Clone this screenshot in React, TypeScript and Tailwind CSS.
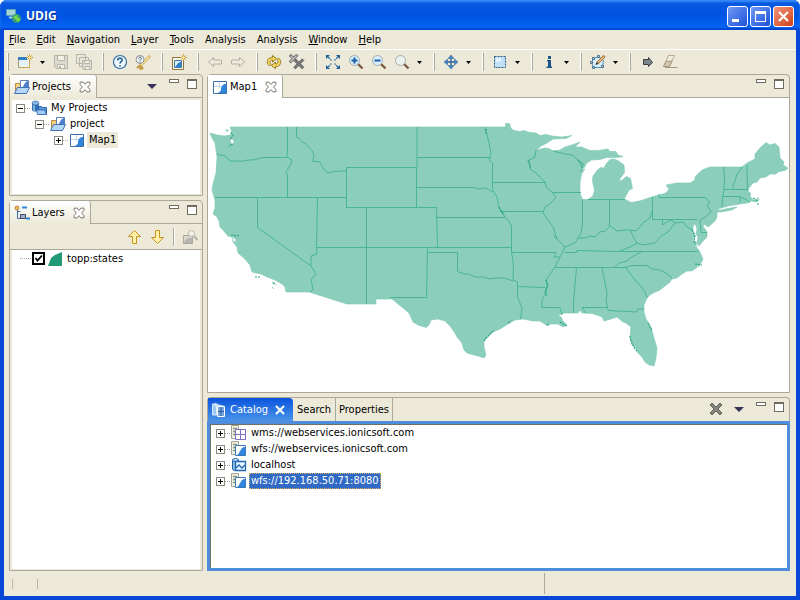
import type { ReactNode } from "react";

const OUTLINE =
  "M230 127H505.500V123.500H509.500L511 128.500 514 130.500 520 131.500 524 130.500 530 132.500 536 133 540 135.500 546 134.500 552 136 562 137 572 135.500 566 138.500 553 139 547 143 541 146 536.500 150 545 148 550 149 553 151 560 150 565 147 572 145 580 142 577 145 575 147 581.500 147 590 150.500 598 150.500 608 149 610 151.500 616 151.500 618 155 623 156.500 616.500 157.500 606.500 157.500 600 159.500 591.500 160 587 163 584 168 578 172 585 169 581.500 174 580 183 580 193 582.500 199.500 588 199.500 593 196 594.500 190 592.500 181.500 593 176 597.500 170 601.500 167 603 169 606.500 163.500 610 159.500 614 159 618.500 161 624 165 624.500 172.500 619 180 621.500 180.500 626.500 176.500 630.500 178.500 632.500 188.500 629 190 626.500 195 624 199 631.500 202.500 641.500 200.500 650 197.500 659 195 666 193 669 189 666 185 677 183 690 183 695 180 695 177 702 170 710 167H742L747 163 755 159 755 154 760 148 766 142.500 770 145 775 143.500 779 147 780 158 784 162 783 165 788 168 786 170 778 172 776 174 770 174 766 177 760 178 757 182 753 183 749 188 748 191 751 193.500 750 196 753 200 758 200 757 197 759 200 757 202 751 201 747 203 740 204 728 206 718 209 719 210.500 728 208.500 737 207 732 210 720 212 717 212 717 217 715 221 708 227 704 224 703 226 707 232 707 237 703 241 699 246 697 243 698 237 696 234 697 229 695 223 693 227 693 231 695 237 692 239 697 243 694 245 699 250 703 259 701 263 700 265 696 268 692 271 687 271 682 274 677 278 672 279 669 283 665 286 660 290 653 293 650 295 647 298 644 305 644 312 646 319 651 327 654 338 657 348 656 358 654 366 649 365 645 362 642 357 638 353 636 348 632 345 630 338 631 327 626 323 623 322 617 317 611 319 604 321 602 317 597 315 592 313.500 582 313 580 310 578 313 565 313 558 315 561 317 563 321 567 325 563 327 558 324 551 324 547 325.500 540 321 533 321 523 319 515 320 508 324 500 329 493 332 489 336 484 341 484 347 486 355 484 358 478 356 467 353 464 350 462 343 457 337 455 333 450 326 445 321 438 319 431 320 429 325 426 327.500 418 325 413 322 409 313 403 308 392 299H376V304H347L309 292 286 292 285 287 282 284 275 280 267 277 261 274 252 272 250 265 244 258 238 253 237 247 233 242 232 237 228 236 223 230 220 227 219 221 217 217 213 214 215 208 215 200 212 190 213 184 216 173 217 157 215 143 212 138 210 133 217 135 225 136 230 135 232 132Z";

const BORDERS =
  "M287.500 127V149L287 157 292 160 291 164 286 172 287.500 176V197M217 154 225 156 227 158 230 161 243 161 248 160 253 160 263 157.500H287M215 197.500H346.500M257.500 197.500V227.500L311 266 316 274 311 280 313 289 311 292M317.500 197.500 316.500 247.500 317 254 311 256 311 266M296.500 127V137L300 139 302 142 305 143 313 152 314 157 312 161 320 162 323 168 328 173 332 172 340 171 346 171M346.500 167.500H417V127M416.500 167.500V207.500M417 157.500H491M346.500 167.500V207.500H436.500L437.500 247.500M366.500 207.500V304M316.500 247.500H511.500M416.500 187.500H474L478 189 484 188 488 189 492 192M485 127 487 135 489 143 491 153 489 160 492.500 163V190L497 197 499 208 505 217 508 220 511.500 226V252L513.500 265 513 280 517.500 282V297L522 308 520.500 319M492 182.500H545M500 211.500H543M436.500 217.500H505M427.500 247.500 426.500 297.500H390M427.500 252.500H457.500V271.500L465 274 469 274 475 277 483 277 490 279 496 278 505 278 513 281M517.500 286.500 545.500 287.500M512 252.500H556L554 257H560M536 150 535 157 529 160 530 169 536 173 545 182 546 187 552 192 556 197 551 203 545 207 543 213 549 221 553 227 557 239M553 235 560 242 565 247 560 257 555 267 550 274 546 280 547 286 546 293 542 300 542 307.500H560L562 315M552 192.500H581M553 151 565 154 572 155 578 160 582 167M582.500 199.500V224L581 233 578 238M609.500 199.500V226M588 199.500H625M565 247 575 243 578 238 585 238 590 236 595 237 600 232 605 231 610 226 617 231 625 230 630 230 636 231 640 227 644 222 650 218 652.500 210V197M652.500 210V219.500H697M659 194V197.500H705L710 202 707 205 711 212 705 217 700 220 701 232.500H707M662.500 219.500V225L670 220 676 223 683 222 687 227 693 230M675 223 668 232 660 237 655 243 643 245 637 243 634 238 630 230M637 243 630 247 620 251M565 252.500H577V250.500L620 251.500H698M641 252 630 258 627 261 619 263 615 267M555 267.500H625L632 265.500H647L652 269 660 270 666 273 672 278M625 267 629 272 635 280 640 285 645 292 647 298M576.500 267.500 573.500 302V313M602 267.500 607 293 606 300 608 310M582 307.500H608M582 307.500 586 313M608 310.500 637 312 638 309 644 309M723.500 167 724.500 178 724 190 722.500 197 722 207M742 167 739 172 737 174 735 181 733 185V190M724 189.500H747M747 165V170L747.500 190M722.500 196.500H740V203M740 197 747 200 750 203";

const DETAILS =
  "M231 132 233 136 230 139 233 144 229 146M486 129V134M528 160 531 168M231 235 240 236M255 277H261M273 283 276 285M484 341 486 338 490 334 494 330M508 323 511 321M547 324 549 326M560 322 567 326M630 336 631 341 635 349 638 352M648 323 652 331M692 230 695 235 694 241 697 247M695 264 702 265M753 198 758 201M757 204H759M578 160 583 164 581 171M546 280 548 285 545 292 547 296M499 207 504 215";

function UsMap() {
  return (
    <svg viewBox="208 98 581 294" className="h-full w-full" preserveAspectRatio="xMinYMin meet" role="img" aria-label="topp:states">
      <path d={OUTLINE} fill="#8ccebc" stroke="#7cc8b2" strokeWidth=".6" />
      <path d={BORDERS} fill="none" stroke="#43b292" strokeWidth=".9" />
      <path d={DETAILS} fill="none" stroke="#2ba580" strokeWidth="1.200" strokeDasharray="2 1" />
      <path d="M230 140 232 139 234 142 232 144ZM232 237 236 240 234 242Z" fill="#fff" />
      <path d="M226 130h2v1h-2zM272 282l3 1M272 287l2 2" fill="#8ccebc" stroke="#8ccebc" />
    </svg>
  );
}

function Svg({ children, size = 16 }: { children: ReactNode; size?: number }) {
  return (
    <svg width={size} height={size} viewBox="0 0 16 16" fill="none" className="shrink-0" aria-hidden="true">
      {children}
    </svg>
  );
}

const star = <path d="M12.500 0v7M9 3.500h7M10.500 1.500l4 4M14.500 1.500l-4 4" stroke="#c08c28" />;
const starCore = <path d="M12.500 1.500v4M10.500 3.500h4" stroke="#fff0a8" />;

const NewIcon = () => (
  <Svg>
    <path d="M1.500 3.500h11v10h-11z" fill="#e4f3fb" stroke="#a79b6c" />
    <path d="M1 3h9v3H1z" fill="#2f7fc4" />
    <path d="M3 13.500h9.500V7" stroke="#d8a74a" />
    {star}
    {starCore}
  </Svg>
);
const SaveIcon = () => (
  <Svg>
    <path d="M1.500 1.500h13v13h-11l-2-2z" fill="#dcdad0" stroke="#b7b4a8" />
    <path d="M4.500 1.500h7v5h-7zM4.500 10.500h7v4h-7z" fill="#f2f0e8" stroke="#b7b4a8" />
    <path d="M6 12h2v2H6z" fill="#b7b4a8" />
  </Svg>
);
const SaveAllIcon = () => (
  <Svg>
    <path d="M.5.5h9v9h-9zM3.500 3.500h9v9h-9z" fill="#e9e6da" stroke="#b7b4a8" />
    <path d="M6.500 6.500h9v9h-8l-1-1z" fill="#dcdad0" stroke="#b7b4a8" />
    <path d="M8.500 6.500h5v3h-5zM9.500 12.500h4v3h-4z" fill="#f2f0e8" stroke="#b7b4a8" />
  </Svg>
);
const HelpIcon = () => (
  <Svg>
    <circle cx="8" cy="8" r="6.500" fill="#f2faff" stroke="#2d6a9c" strokeWidth="1.200" />
    <path d="M5.700 6.500C5.700 3.200 10.400 3.500 10.200 6.200 10.100 7.700 8 7.700 8 9.600M8 11v1.500" stroke="#2d6a9c" strokeWidth="1.700" />
  </Svg>
);
const HelpKeyIcon = () => (
  <Svg>
    <path d="M15 2 5 12l-3 2M5 12l1 3 2-2" stroke="#c79a44" strokeWidth="2.600" />
    <path d="M14.500 2.500 6 11" stroke="#ffe9a4" strokeWidth="1.500" />
    <circle cx="5" cy="5.500" r="4" fill="#eef3f5" stroke="#878e94" />
    <path d="M3.700 4.500c0-2 3-1.500 2.600.2C6.200 5.600 5 5.600 5 6.600M5 7.500v1" stroke="#4b5a6c" />
  </Svg>
);
const NewMapIcon = () => (
  <Svg>
    <path d="M1.500 3.500h11v12h-11z" fill="#fdf7e0" stroke="#8a7444" />
    <path d="M3.500 6.500h7v7h-7z" fill="#dff0fb" stroke="#3a78a8" />
    <path d="M10 8v5H4c2-1 2-5 6-5Z" fill="#2f80cf" />
    {star}
    {starCore}
  </Svg>
);
const BackIcon = () => (
  <Svg>
    <path d="M1.500 8 6.500 3.500v2.500H13.500a1 1 0 0 1 1 1v3H6.500v2.500Z" fill="#efecdf" stroke="#b1ae9f" />
  </Svg>
);
const ForwardIcon = () => (
  <Svg>
    <path d="M14.500 8 9.500 3.500v2.500H2.500a1 1 0 0 0-1 1v3h8v2.500Z" fill="#efecdf" stroke="#b1ae9f" />
  </Svg>
);
const RefreshIcon = () => (
  <Svg>
    <path
      d="M6.500 1.500 10.500 4.500 6.500 8V6C4 6 3 8 5 10.500L3.500 12C-.5 8.500 1 3.500 6.500 3.500Z"
      fill="#f7dc62"
      stroke="#967a22"
      strokeLinejoin="round"
    />
    <path
      d="M9.500 14.500 5.500 11.500 9.500 8V10C12 10 13 8 11 5.500L12.500 4C16.500 7.500 15 12.500 9.500 12.500Z"
      fill="#f7dc62"
      stroke="#967a22"
      strokeLinejoin="round"
    />
  </Svg>
);
const cross = "m2 4 2-2 4 4 4-4 2 2-4 4 4 4-2 2-4-4-4 4-2-2 4-4Z";
const RemoveAllIcon = () => (
  <Svg>
    <g transform="translate(-1 -1) scale(.7)">
      <path d={cross} fill="#d8d6ce" stroke="#77777a" strokeWidth="1.500" />
    </g>
    <g transform="translate(3 3) scale(.85)">
      <path d={cross} fill="#77777a" stroke="#666" strokeLinejoin="round" />
    </g>
  </Svg>
);
const RemoveIcon = () => (
  <Svg>
    <path d={cross} fill="#84847f" stroke="#65655f" strokeLinejoin="round" />
  </Svg>
);
const ExtentIcon = () => (
  <Svg>
    <path d="m2 2 4.500 4.500M14 2 9.500 6.500M2 14l4.500-4.500M14 14 9.500 9.500" stroke="#2f76b2" strokeWidth="1.300" strokeDasharray="4 .8" />
    <path d="M1 1h4L1 5zM15 1h-4l4 4zM1 15h4l-4-4zM15 15h-4l4-4z" fill="#1f5e97" />
  </Svg>
);
const Magnifier = ({ sign, tint }: { sign?: string; tint: string }) => (
  <Svg>
    <path d="m10 10 4.500 4.500" stroke="#7d5a40" strokeWidth="2.400" />
    <circle cx="6.500" cy="6.500" r="5" fill={tint} stroke="#a5adb0" />
    {sign && <path d={sign} stroke="#1d5fa8" strokeWidth="2" />}
  </Svg>
);
const PanIcon = () => (
  <Svg>
    <path d="M8 2v12M2 8h12" stroke="#2b5f97" strokeWidth="1.300" />
    <path d="m8 1 3 3.500H5zM8 15l3-3.500H5zM1 8l3.500-3v6zM15 8l-3.500-3v6z" fill="#4b8cca" stroke="#2b5f97" strokeWidth=".5" />
  </Svg>
);
const SelectIcon = () => (
  <Svg>
    <path d="M2.500 2.500h11v11h-11z" fill="#bfe0f6" stroke="#2a5a80" strokeDasharray="2 1" />
    <path d="M4 4h5v4H4z" fill="#e0f1fb" />
  </Svg>
);
const InfoIcon = () => (
  <Svg>
    <path d="M7 2h3v3H7zM6 6h4v6.500h1V14H5.500v-1.500H7v-5H6z" fill="#1f5488" />
  </Svg>
);
const EditIcon = () => (
  <Svg>
    <path d="m3.500 4.500 5-2 5 4-1 7h-9l-2-5Z" fill="#d9effb" stroke="#4a8fb8" />
    <path d="M7.500 1.500h2v2h-2zM2.500 3.500h2v2h-2zM.5 7.500h2v2h-2zM2.500 12.500h2v2h-2zM11.500 11.500h2v2h-2z" fill="#cfe0ea" stroke="#4a6f88" />
    <path d="m14.500 2-7 7" stroke="#8c5e20" strokeWidth="2.600" />
    <path d="m14 2.500-6 6" stroke="#f2c47c" strokeWidth="1.400" />
    <path d="m5.500 11 1-3 2 2Z" fill="#333" />
  </Svg>
);
const TagIcon = () => (
  <Svg>
    <path d="M4.500 5.500h5v-2l4 5-4 4v-2h-5z" fill="#7b858c" stroke="#3a4046" />
  </Svg>
);
const EraserIcon = () => (
  <Svg>
    <path d="M6.500 1.500h6l-5 11h-6Z" fill="#f2ebdd" stroke="#b6a893" />
    <path d="m4 7.500 6-.5-2.500 5.500h-6Z" fill="#d7c6ae" stroke="#a89880" />
    <path d="M3 13.500h12.500" stroke="#a89880" />
  </Svg>
);
const OpenFolderIcon = () => (
  <Svg>
    <path d="M1.500 13.500v-9h4l1 2h6v7z" fill="#f8d27c" stroke="#b98a44" />
    <path d="M6.500 1.500h8v8h-8z" fill="#fff" stroke="#5b80b4" />
    <path d="M14 2v7H8c2-2 2-6 6-7Z" fill="#4f80d0" />
    <path d="M.5 14.500 3.500 8.500h12l-3 6z" fill="#b4d6f7" stroke="#4272b4" />
  </Svg>
);
const ProjectsIcon = () => (
  <Svg>
    <path d="M1 3v7c0 2 7 2 7 0V3Z" fill="#3671b4" />
    <path d="M2 4v6c0 1 2 1 2 1V4Z" fill="#7fb0de" />
    <ellipse cx="4.500" cy="3" rx="3.500" ry="2" fill="#8ab6e2" stroke="#2b5e9c" strokeWidth=".6" />
    <path d="M7.500 14.500v-8h3l1 1h4v7z" fill="#5592d8" stroke="#2d64aa" />
    <path d="M6.500 14.500 5.500 10h8l2 4.500z" fill="#a4cdf5" stroke="#3c74b8" />
  </Svg>
);
const MapIcon = () => (
  <Svg>
    <path d="M1.500 2.500h13v12h-13z" fill="#fff" stroke="#3b6ea4" />
    <path d="M7.500 3v6M2 7.500h7" stroke="#c5d7e8" />
    <path d="M14 5v9H6c1-1 3-1 3-4s2-5 5-5Z" fill="#2f86dc" />
  </Svg>
);
const LayersIcon = () => (
  <Svg>
    <path d="M3.500 5v8.500H7M3.500 6.500h3" stroke="#3a6ea8" />
    <circle cx="3" cy="3" r="2" fill="#f0ba58" stroke="#b98a44" />
    <path d="M8 2.500h5M12 13.500h4" stroke="#2f86dc" strokeWidth="2" />
    <path d="M6.500 9.500h5v4h-5z" fill="#a9b0cc" stroke="#3d4668" />
  </Svg>
);
const ServerIcon = ({ wms }: { wms?: boolean }) => (
  <Svg>
    <path d="M.5.500h7v13h-7z" fill="#f1f1e4" stroke="#a0a596" />
    <path d="M2 3.500h4M2 6.500h4M2 9.500h4" stroke="#83987a" strokeWidth="1.500" />
    <path d="M4.500 4.500h10v10h-10z" fill="#fff" stroke={wms ? "#7d6fc4" : "#3b78b8"} />
    {wms ? <path d="M9.500 5v9M5 9.500h9" stroke="#7d6fc4" /> : <path d="M14 6v8H6c3-1 3-8 8-8Z" fill="#2f86dc" />}
  </Svg>
);
const LocalIcon = () => (
  <Svg>
    <path d="M1.500 3v9c0 2 6 2 6 0V3Z" fill="#8dbde8" stroke="#2464a8" />
    <ellipse cx="4.500" cy="3" rx="3" ry="1.500" fill="#cce4f8" stroke="#2464a8" />
    <path d="M4.500 4.500h10v9h-10z" fill="#e7f3fd" stroke="#1f66b4" strokeWidth="1.300" />
    <path d="m5 11 3-3 3 3 3-3" stroke="#1f66b4" strokeWidth="1.300" />
  </Svg>
);
const CatalogIcon = () => (
  <Svg>
    <path d="M1.500 2v11h4V2ZM4.500 1v3h8" fill="#9cc8f4" stroke="#dceaff" />
    <path d="M6.500 4.500h7v10h-7z" fill="#77a8dc" stroke="#fff" />
    <path d="M10 5v9M7 9.500h6" stroke="#3157a0" />
  </Svg>
);
const ArrowIcon = ({ down }: { down?: boolean }) => (
  <Svg>
    <path
      d={down ? "M5.500 1.500h4v7h4l-6 6-6-6h4Z" : "M5.500 14.500h4v-7h4l-6-6-6 6h4Z"}
      fill="#fff1a8"
      stroke="#c89224"
    />
  </Svg>
);
const ZoomLayerIcon = () => (
  <Svg>
    <path d="M1.500 6.500h9v8h-9z" fill="#dcdad0" stroke="#aaa89e" />
    <path d="M2 14c1-4 3-5 8-5v5Z" fill="#b5b4ae" />
    <circle cx="9.500" cy="4.500" r="3" fill="#f4f2ea" stroke="#b5b3a8" />
    <path d="m12 7 3.500 4" stroke="#b5b3a8" strokeWidth="2" />
  </Svg>
);
const AppIcon = () => (
  <Svg>
    <path d="M.5 1.500h9v6h-9z" fill="#a8d4d8" stroke="#5fa2b8" />
    <path d="M3 9.500h7" stroke="#a8d4d8" strokeWidth="2" />
    <circle cx="10.500" cy="10.500" r="4.500" fill="#389c70" />
    <path d="m7 9 4-2 1 3 3 1-3 3-2-2Z" fill="#72d852" />
  </Svg>
);

const Drop = () => (
  <svg width="5" height="3" viewBox="0 0 5 3" aria-hidden="true">
    <path d="M0 0h5L2.500 3z" fill="#000" />
  </svg>
);

type Tool = { name: string; icon: ReactNode; drop?: boolean };
const TOOLS: Tool[][] = [
  [
    { name: "New", icon: <NewIcon />, drop: true },
    { name: "Save", icon: <SaveIcon /> },
    { name: "Save All", icon: <SaveAllIcon /> },
  ],
  [
    { name: "Help Contents", icon: <HelpIcon /> },
    { name: "Search Help", icon: <HelpKeyIcon /> },
  ],
  [{ name: "New Map", icon: <NewMapIcon /> }],
  [
    { name: "Back", icon: <BackIcon /> },
    { name: "Forward", icon: <ForwardIcon /> },
  ],
  [
    { name: "Refresh", icon: <RefreshIcon /> },
    { name: "Stop Rendering", icon: <RemoveAllIcon /> },
  ],
  [
    { name: "Zoom to Extent", icon: <ExtentIcon /> },
    { name: "Zoom In", icon: <Magnifier sign="M6.500 3.500v6M3.500 6.500h6" tint="#d7eefb" /> },
    { name: "Zoom Out", icon: <Magnifier sign="M3.500 6.500h6" tint="#d7eefb" /> },
    { name: "Zoom", icon: <Magnifier tint="#e9f2ec" />, drop: true },
  ],
  [{ name: "Pan", icon: <PanIcon />, drop: true }],
  [{ name: "Select", icon: <SelectIcon />, drop: true }],
  [{ name: "Info", icon: <InfoIcon />, drop: true }],
  [{ name: "Edit Geometry", icon: <EditIcon />, drop: true }],
  [
    { name: "Commit", icon: <TagIcon /> },
    { name: "Clear", icon: <EraserIcon /> },
  ],
];

const MENUS = [
  ["F", "ile"],
  ["E", "dit"],
  ["N", "avigation"],
  ["L", "ayer"],
  ["T", "ools"],
  ["", "Analysis"],
  ["", "Analysis"],
  ["W", "indow"],
  ["H", "elp"],
];

function PanelButtons({ children }: { children?: ReactNode }) {
  return (
    <div className="ml-auto flex items-start pt-[4px] pr-[5px]">
      {children}
      <button aria-label="Minimize" className="mr-[8px] h-[4px] w-[10px] border border-[#6f6c5f] bg-white" />
      <button aria-label="Maximize" className="h-[10px] w-[10px] border border-t-2 border-[#6f6c5f] bg-white" />
    </div>
  );
}

const ViewMenu = () => (
  <button aria-label="View menu" className="mt-[5px] mr-[12px]">
    <svg width="10" height="5" viewBox="0 0 10 5" className="block">
      <path d="M0 0h10L5 5z" fill="#343256" />
    </svg>
  </button>
);

function CloseTab() {
  return (
    <button aria-label="Close">
      <svg width="12" height="12" viewBox="0 0 16 16" className="block">
        <path d="m1.500 1.500h4l2.500 3 2.500-3h4v3L11.500 8l3 3.500v3h-4L8 11.500l-2.500 3h-4v-3l3-3.500-3-3.500Z" fill="#fff" stroke="#77746a" strokeWidth="1.300" />
      </svg>
    </button>
  );
}

function Tab({ icon, label, white }: { icon: ReactNode; label: string; white?: boolean }) {
  return (
    <div
      className={
        "-mb-px flex items-center gap-[2px] rounded-tr-[3px] border-r border-[#aca899] pr-[5px] pl-[4px] " +
        (white ? "bg-white" : "bg-linear-to-b from-white to-[#ece9d8]")
      }
    >
      {icon}
      <span className="mr-[6px]">{label}</span>
      <CloseTab />
    </div>
  );
}

const headerClass = "flex h-[23px] shrink-0 border-b border-[#aca899]";
const panelClass = "flex flex-col rounded-t-[4px] border border-[#aca899]";

function Expander({ open }: { open?: boolean }) {
  return (
    <button
      aria-label={open ? "Collapse" : "Expand"}
      className="flex h-[9px] w-[9px] shrink-0 items-center justify-center border border-[#8a8a80] bg-white"
    >
      <svg width="5" height="5" viewBox="0 0 5 5">
        <path d={open ? "M0 2.500h5" : "M0 2.500h5M2.500 0v5"} stroke="#000" />
      </svg>
    </button>
  );
}

function TreeRow({ open, icon, label, tone, indent }: { open?: boolean; icon: ReactNode; label: string; tone?: string; indent?: string }) {
  return (
    <li className={"flex h-[16px] items-center " + (indent ?? "")}>
      <Expander open={open} />
      <span className="mr-[1px] w-[5px] border-t border-dotted border-[#aca899]" />
      {icon}
      <span className={"ml-[2px] px-[2px] leading-[16px] " + (tone ?? "")}>{label}</span>
    </li>
  );
}

const captionButton = "flex h-[21px] w-[21px] items-center justify-center rounded-[3px] border border-white";

export default function App() {
  return (
    <div className="flex h-screen w-full flex-col overflow-hidden rounded-t-[7px] bg-[#0846d8] font-['DejaVu_Sans_Condensed','DejaVu_Sans',sans-serif] text-[11px] leading-[14px] text-black">
      <header className="flex h-[30px] shrink-0 items-center gap-[4px] bg-linear-to-b from-[#0a5ae0] via-[#0054e3] to-[#0566f8] pt-[2px] pr-[6px] pl-[6px] shadow-[inset_0_2px_2px_#3a8cf8,inset_0_-2px_1px_#0048d0]">
        <AppIcon />
        <h1 className="font-['Open_Sans',sans-serif] text-[12px] font-bold text-white [text-shadow:1px_1px_#0a2f90]">UDIG</h1>
        <div className="ml-auto flex gap-[2px]">
          <button aria-label="Minimize window" className={captionButton + " bg-linear-to-br from-[#6f98f4] to-[#1e50d8]"}>
            <span className="mt-[8px] mr-[5px] h-[3px] w-[7px] bg-white" />
          </button>
          <button aria-label="Maximize window" className={captionButton + " bg-linear-to-br from-[#6f98f4] to-[#1e50d8]"}>
            <span className="h-[11px] w-[11px] border border-t-[3px] border-white" />
          </button>
          <button aria-label="Close window" className={captionButton + " bg-linear-to-br from-[#f09478] to-[#d03c14]"}>
            <svg width="13" height="13" viewBox="0 0 13 13">
              <path d="m2 2 9 9M11 2l-9 9" stroke="#fff" strokeWidth="2.200" />
            </svg>
          </button>
        </div>
      </header>

      <div className="mx-[4px] mb-[4px] flex min-h-0 flex-1 flex-col bg-[#ece9d8]">
        <nav className="flex h-[20px] shrink-0 items-center gap-[11px] border-b border-white pl-[5px]">
          {MENUS.map(([key, rest], i) => (
            <button key={i}>
              <u className="underline-offset-1">{key}</u>
              {rest}
            </button>
          ))}
        </nav>

        <div role="toolbar" className="flex h-[24px] shrink-0 items-center">
          {TOOLS.map((group, g) => (
            <div key={g} className="flex items-center">
              <span className={"mr-[4px] h-[18px] w-[2px] border-r border-l border-r-[#aca899] border-l-white " + (g ? "ml-[7px]" : "ml-[3px]")} />
              {group.map((t) => (
                <div key={t.name} className="flex">
                  <button aria-label={t.name} className="flex w-[23px] justify-center">
                    {t.icon}
                  </button>
                  {t.drop && (
                    <button aria-label={t.name + " options"} className="flex w-[13px] items-center justify-center">
                      <Drop />
                    </button>
                  )}
                </div>
              ))}
            </div>
          ))}
        </div>

        <main className="flex min-h-0 flex-1 gap-[4px] pr-[6px] pl-[5px]">
          <div className="flex w-[194px] shrink-0 flex-col gap-[4px]">
            <section className={panelClass + " h-[122px] shrink-0"}>
              <div className={headerClass}>
                <Tab icon={<OpenFolderIcon />} label="Projects" />
                <PanelButtons>
                  <ViewMenu />
                </PanelButtons>
              </div>
              <ul className="m-[2px] mb-px flex-1 bg-white pl-[4px]">
                <TreeRow open icon={<ProjectsIcon />} label="My Projects" />
                <TreeRow open icon={<OpenFolderIcon />} label="project" indent="pl-[19px]" />
                <TreeRow icon={<MapIcon />} label="Map1" indent="pl-[38px]" tone="bg-[#ece9d8]" />
              </ul>
            </section>

            <section className={panelClass + " min-h-0 flex-1"}>
              <div className={headerClass}>
                <Tab icon={<LayersIcon />} label="Layers" />
                <PanelButtons />
              </div>
              <div className="flex h-[26px] shrink-0 items-center justify-end gap-[7px] border-b border-[#aca899] pr-[4px]">
                <button aria-label="Move up"><ArrowIcon /></button>
                <button aria-label="Move down"><ArrowIcon down /></button>
                <span className="h-[18px] w-[2px] border-r border-l border-r-white border-l-[#aca899]" />
                <button aria-label="Zoom to layer"><ZoomLayerIcon /></button>
              </div>
              <div className="mx-[2px] mb-px flex-1 bg-white">
                <label className="flex h-[17px] items-center pl-[8px]">
                  <span className="mr-[1px] w-[11px] border-t border-dotted border-[#aca899]" />
                  <span className="relative flex h-[13px] w-[13px]">
                    <input type="checkbox" defaultChecked className="h-[13px] w-[13px] appearance-none border-2 border-black bg-white" />
                    <svg width="13" height="13" viewBox="0 0 13 13" className="pointer-events-none absolute inset-0">
                      <path d="m3.500 6 2 2.500 4.500-5" fill="none" stroke="#000" strokeWidth="1.800" />
                    </svg>
                  </span>
                  <svg width="14" height="14" viewBox="0 0 14 14" className="ml-[3px]" aria-hidden="true">
                    <path d="M0 14 3 6l4-3 7-3v14Z" fill="#219a78" />
                  </svg>
                  <span className="ml-[5px]">topp:states</span>
                </label>
              </div>
            </section>
          </div>

          <div className="flex min-w-0 flex-1 flex-col gap-[4px]">
            <section className={panelClass + " min-h-0 flex-1"}>
              <div className={headerClass}>
                <Tab icon={<MapIcon />} label="Map1" white />
                <PanelButtons />
              </div>
              <div className="min-h-0 flex-1 bg-white">
                <UsMap />
              </div>
            </section>

            <section className="flex h-[174px] shrink-0 flex-col">
              <div className="flex h-[24px] shrink-0 rounded-t-[4px] border border-b-0 border-[#aca899]">
                <div className="flex items-center gap-[3px] rounded-tr-[4px] bg-linear-to-b from-[#0a52dc] to-[#4a94ea] pr-[8px] pl-[3px] text-white">
                  <CatalogIcon />
                  <span className="mr-[4px]">Catalog</span>
                  <button aria-label="Close Catalog">
                    <svg width="10" height="10" viewBox="0 0 10 10" className="block">
                      <path d="m1 1 8 8M9 1 1 9" stroke="#fff" strokeWidth="2" />
                    </svg>
                  </button>
                </div>
                <button className="border-r border-[#aca899] px-[4px]">Search</button>
                <button className="border-r border-[#aca899] px-[3px]">Properties</button>
                <PanelButtons>
                  <button aria-label="Remove" className="-mt-px mr-[10px]"><RemoveIcon /></button>
                  <ViewMenu />
                </PanelButtons>
              </div>
              <div className="flex-1 border-[3px] border-[#4f8edc] bg-white">
                <ul className="h-full border-t border-l border-[#716f64] pl-[5px]">
                  <TreeRow icon={<ServerIcon wms />} label="wms://webservices.ionicsoft.com" />
                  <TreeRow icon={<ServerIcon />} label="wfs://webservices.ionicsoft.com" />
                  <TreeRow icon={<LocalIcon />} label="localhost" />
                  <TreeRow
                    icon={<ServerIcon />}
                    label="wfs://192.168.50.71:8080"
                    tone="bg-[#316ac5] text-white outline-1 -outline-offset-1 outline-dotted outline-[#e0b060]"
                  />
                </ul>
              </div>
            </section>
          </div>
        </main>

        <footer className="flex h-[25px] shrink-0 items-center pl-[8px]">
          <span className="h-[10px] w-[26px] border-r border-l border-[#bdb9a8]" />
          <span className="ml-auto h-[21px] w-[252px] border-l border-[#aca899]" />
        </footer>
      </div>
    </div>
  );
}
